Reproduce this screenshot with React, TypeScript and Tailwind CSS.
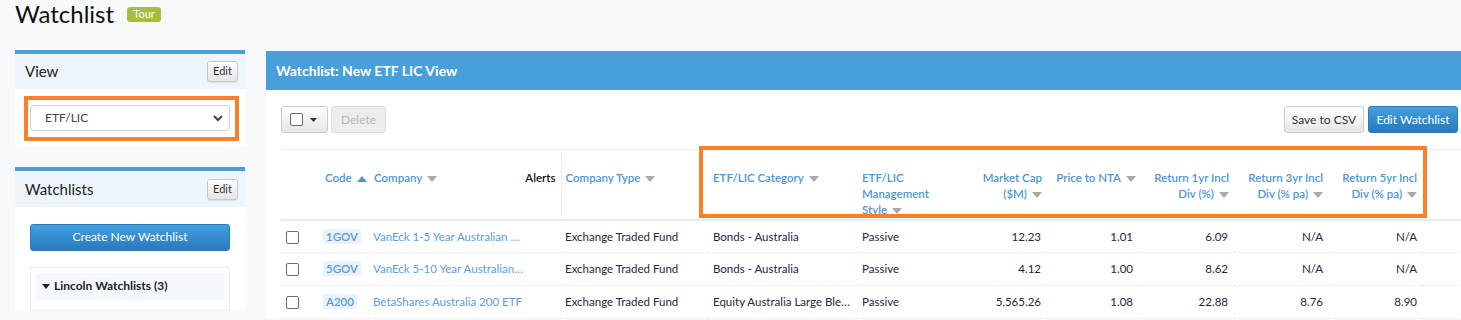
import React from "react";

const font = { fontFamily: 'Lato, "Open Sans", sans-serif' };

const SortDown = ({ color = "#a9a9a9" }: { color?: string }) => (
  <svg width="10" height="6" viewBox="0 0 10 6" className="inline-block ml-[5px] align-middle">
    <path d="M0 0 L10 0 L5 6 Z" fill={color} />
  </svg>
);

const SortUp = () => (
  <svg width="10" height="6" viewBox="0 0 10 6" className="inline-block ml-[5px] align-middle">
    <path d="M0 6 L10 6 L5 0 Z" fill="#4b96d8" />
  </svg>
);

const EditBtn = () => (
  <button className="h-[21px] w-[31px] rounded-[3px] border border-[#c9c9c9] bg-gradient-to-b from-white to-[#e4e4e4] text-[11px] text-[#333] shadow-[0_1px_1px_rgba(0,0,0,0.08)]">
    Edit
  </button>
);

const CheckBox = () => (
  <span className="inline-block h-[13px] w-[13px] rounded-[2px] border border-[#6b6b6b] bg-white" />
);

const rows = [
  {
    code: "1GOV",
    company: "VanEck 1-5 Year Australian Government Bond ETF",
    type: "Exchange Traded Fund",
    category: "Bonds - Australia",
    style: "Passive",
    cap: "12.23",
    nta: "1.01",
    r1: "6.09",
    r3: "N/A",
    r5: "N/A",
  },
  {
    code: "5GOV",
    company: "VanEck 5-10 Year Australian Government Bond ETF",
    type: "Exchange Traded Fund",
    category: "Bonds - Australia",
    style: "Passive",
    cap: "4.12",
    nta: "1.00",
    r1: "8.62",
    r3: "N/A",
    r5: "N/A",
  },
  {
    code: "A200",
    company: "BetaShares Australia 200 ETF",
    type: "Exchange Traded Fund",
    category: "Equity Australia Large Blend",
    style: "Passive",
    cap: "5,565.26",
    nta: "1.08",
    r1: "22.88",
    r3: "8.76",
    r5: "8.90",
  },
];

const App = () => {
  return (
    <div className="h-[320px] w-[1461px] overflow-hidden bg-[#f8f9fb] text-[#222]" style={font}>
      <div className="flex h-[50px] items-start pl-[15px]">
        <h1 className="text-[24px] leading-[28px] text-[#111]">Watchlist</h1>
        <span className="ml-[13px] mt-[7px] flex h-[15px] w-[34px] items-center justify-center rounded-[3px] bg-[#a5bf3a] text-[11px] text-white">
          Tour
        </span>
      </div>

      <div className="flex items-start">
        <div className="ml-[15px] w-[230px] shrink-0">
          <div className="border-t-4 border-[#4aa0dc] bg-white">
            <div className="flex h-[35px] items-center justify-between bg-[#eef5fc] pl-[10px] pr-[7px]">
              <span className="text-[15px] text-[#222]">View</span>
              <EditBtn />
            </div>
            <div className="pb-[5px] pl-[9px] pr-[6px] pt-[7px]">
              <div className="border-4 border-[#ff7f27] pb-[6px] pl-[2px] pr-[5px] pt-[5px]">
                <div className="flex h-[26px] w-[200px] items-center justify-between rounded-[4px] border border-[#cfcfcf] bg-white pl-[14px] pr-[6px] text-[12px] text-[#444]">
                  <span>ETF/LIC</span>
                  <svg width="10" height="7" viewBox="0 0 10 7">
                    <path d="M1 1 L5 5 L9 1" stroke="#444" strokeWidth="2" fill="none" />
                  </svg>
                </div>
              </div>
            </div>
          </div>

          <div className="mt-[21px] border-t-4 border-[#4aa0dc] bg-white">
            <div className="flex h-[36px] items-center justify-between bg-[#eef5fc] pl-[10px] pr-[7px]">
              <span className="text-[15px] text-[#222]">Watchlists</span>
              <EditBtn />
            </div>
            <div className="px-[15px] pt-[16px]">
              <button className="h-[27px] w-[200px] rounded-[3px] border border-[#2a7bbd] bg-gradient-to-b from-[#43a0e0] to-[#2779bd] text-[12px] text-white">
                Create New Watchlist
              </button>
              <div className="mt-[16px] border border-[#e8eef4] px-[5px] pb-[10px] pt-[5px]">
                <div className="flex h-[27px] items-center rounded-[3px] bg-[#f4f8fc] pl-[6px] text-[12px] font-bold text-[#222]">
                  <svg width="8" height="5" viewBox="0 0 8 5" className="mr-[4px]">
                    <path d="M0 0 L8 0 L4 5 Z" fill="#222" />
                  </svg>
                  Lincoln Watchlists (3)
                </div>
              </div>
            </div>
          </div>
        </div>

        <div className="ml-[21px] mt-[1px] min-w-0 flex-1 bg-white">
          <div className="flex h-[39px] items-center bg-[#479fdc] pl-[10px] text-[14px] font-bold text-white">
            Watchlist: New ETF LIC View
          </div>
          <div className="pl-[15px] pr-[3px] pt-[16px]">
            <div className="flex h-[27px] items-center justify-between">
              <div className="flex h-full gap-[3px]">
                <button className="flex h-[27px] w-[47px] items-center gap-[7px] rounded-[3px] border border-[#cccccc] bg-gradient-to-b from-white to-[#e6e6e6] pl-[8px]">
                  <CheckBox />
                  <svg width="7" height="4" viewBox="0 0 7 4">
                    <path d="M0 0 L7 0 L3.5 4 Z" fill="#333" />
                  </svg>
                </button>
                <button className="h-[27px] w-[55px] rounded-[3px] border border-[#dddddd] bg-[#ececec] text-[12px] text-[#b9b9b9]">
                  Delete
                </button>
              </div>
              <div className="flex h-full gap-[4px]">
                <button className="h-[27px] w-[80px] rounded-[3px] border border-[#cccccc] bg-gradient-to-b from-white to-[#e6e6e6] text-[12px] text-[#333]">
                  Save to CSV
                </button>
                <button className="h-[27px] w-[90px] rounded-[3px] border border-[#2a7bbd] bg-gradient-to-b from-[#43a0e0] to-[#2779bd] text-[12px] text-white">
                  Edit Watchlist
                </button>
              </div>
            </div>

            <div className="relative mt-[16px] w-[1201px]">
              <table className="w-[1201px] table-fixed border-collapse text-[11.5px]">
                <colgroup>
                  <col className="w-[39px]" />
                  <col className="w-[49px]" />
                  <col className="w-[149px]" />
                  <col className="w-[43px]" />
                  <col className="w-[147px]" />
                  <col className="w-[149px]" />
                  <col className="w-[113px]" />
                  <col className="w-[77px]" />
                  <col className="w-[94px]" />
                  <col className="w-[93px]" />
                  <col className="w-[94px]" />
                  <col className="w-[94px]" />
                  <col className="w-[60px]" />
                </colgroup>
                <thead>
                  <tr className="h-[70px] border-b-2 border-t border-b-[#e3eef9] border-t-[#e8f0f8] align-top font-semibold leading-[16px] text-[#4b96d8]">
                    <th />
                    <th className="whitespace-nowrap px-[5px] pt-[20px] text-left font-semibold">
                      Code
                      <SortUp />
                    </th>
                    <th className="whitespace-nowrap px-[5px] pt-[20px] text-left font-semibold">
                      Company
                      <SortDown />
                    </th>
                    <th className="px-[5px] pt-[20px] text-right font-semibold text-[#111]">Alerts</th>
                    <th className="whitespace-nowrap border-l border-[#e3eef9] px-[4px] pt-[20px] text-left font-semibold">
                      Company Type
                      <SortDown />
                    </th>
                    <th className="whitespace-nowrap px-[5px] pt-[20px] text-left font-semibold">
                      ETF/LIC Category
                      <SortDown />
                    </th>
                    <th className="whitespace-nowrap px-[5px] pt-[20px] text-left font-semibold">
                      ETF/LIC
                      <br />
                      Management
                      <br />
                      Style
                      <SortDown />
                    </th>
                    <th className="whitespace-nowrap px-[5px] pt-[20px] text-right font-semibold">
                      Market Cap
                      <br />
                      ($M)
                      <SortDown />
                    </th>
                    <th className="whitespace-nowrap px-[5px] pt-[20px] text-right font-semibold">
                      Price to NTA
                      <SortDown />
                    </th>
                    <th className="whitespace-nowrap px-[5px] pt-[20px] text-right font-semibold">
                      Return 1yr Incl
                      <br />
                      Div (%)
                      <SortDown />
                    </th>
                    <th className="whitespace-nowrap px-[5px] pt-[20px] text-right font-semibold">
                      Return 3yr Incl
                      <br />
                      Div (% pa)
                      <SortDown />
                    </th>
                    <th className="whitespace-nowrap px-[5px] pt-[20px] text-right font-semibold">
                      Return 5yr Incl
                      <br />
                      Div (% pa)
                      <SortDown />
                    </th>
                    <th />
                  </tr>
                </thead>
                <tbody>
                  {rows.map((r) => (
                    <tr key={r.code} className="h-[33px] border-b border-dotted border-[#dfe7ef] text-[#2a2440]">
                      <td className="pl-[5px] pt-[6px]">
                        <CheckBox />
                      </td>
                      <td className="px-[3px]">
                        <span className="rounded-[3px] bg-[#e8f2fc] px-[3px] py-[1px] font-semibold text-[#5b9ad6]">
                          {r.code}
                        </span>
                      </td>
                      <td colSpan={2} className="px-[4px] text-[#5b9ddb]">
                        <div className="w-[152px] truncate">{r.company}</div>
                      </td>
                      <td className="truncate px-[4px]">{r.type}</td>
                      <td className="truncate px-[5px]">{r.category}</td>
                      <td className="truncate px-[5px]">{r.style}</td>
                      <td className="px-[6px] text-right">{r.cap}</td>
                      <td className="px-[8px] text-right">{r.nta}</td>
                      <td className="px-[6px] text-right">{r.r1}</td>
                      <td className="px-[5px] text-right">{r.r3}</td>
                      <td className="px-[5px] text-right">{r.r5}</td>
                      <td />
                    </tr>
                  ))}
                </tbody>
              </table>
              <div className="pointer-events-none absolute left-[418px] top-[-3px] h-[72px] w-[728px] border-4 border-[#ff7f27]" />
            </div>
          </div>
        </div>
      </div>
    </div>
  );
};

export default App;
